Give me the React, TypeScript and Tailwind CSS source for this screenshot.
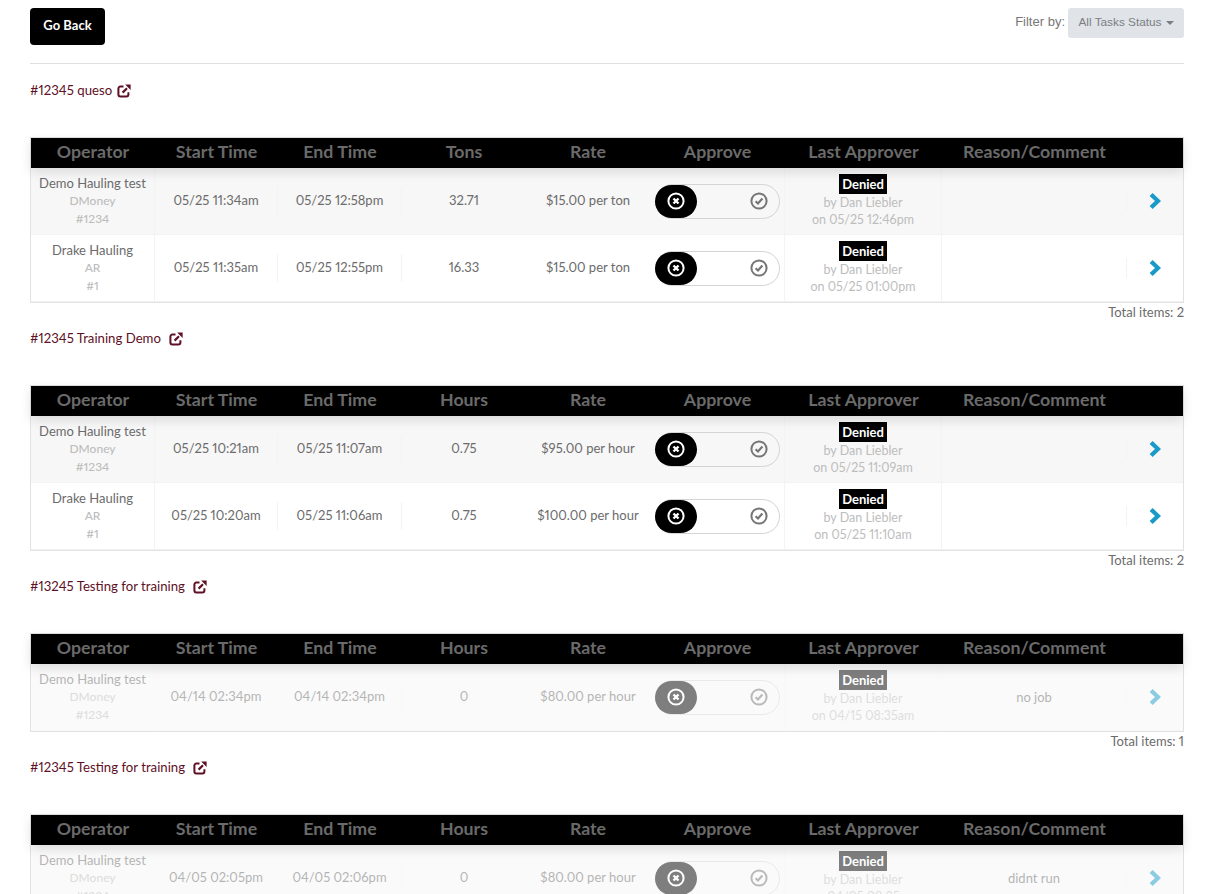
import React from 'react';

type Row = {
  name: string;
  nick: string;
  num: string;
  start: string;
  end: string;
  qty: string;
  rate: string;
  on: string;
  comment?: string;
};

type Job = {
  id: string;
  title: string;
  unit: string;
  faded?: boolean;
  total?: number;
  rows: Row[];
};

const jobs: Job[] = [
  {
    id: '#12345',
    title: 'queso',
    unit: 'Tons',
    total: 2,
    rows: [
      { name: 'Demo Hauling test', nick: 'DMoney', num: '#1234', start: '05/25 11:34am', end: '05/25 12:58pm', qty: '32.71', rate: '$15.00 per ton', on: 'on 05/25 12:46pm' },
      { name: 'Drake Hauling', nick: 'AR', num: '#1', start: '05/25 11:35am', end: '05/25 12:55pm', qty: '16.33', rate: '$15.00 per ton', on: 'on 05/25 01:00pm' },
    ],
  },
  {
    id: '#12345',
    title: 'Training Demo',
    unit: 'Hours',
    total: 2,
    rows: [
      { name: 'Demo Hauling test', nick: 'DMoney', num: '#1234', start: '05/25 10:21am', end: '05/25 11:07am', qty: '0.75', rate: '$95.00 per hour', on: 'on 05/25 11:09am' },
      { name: 'Drake Hauling', nick: 'AR', num: '#1', start: '05/25 10:20am', end: '05/25 11:06am', qty: '0.75', rate: '$100.00 per hour', on: 'on 05/25 11:10am' },
    ],
  },
  {
    id: '#13245',
    title: 'Testing for training',
    unit: 'Hours',
    faded: true,
    total: 1,
    rows: [
      { name: 'Demo Hauling test', nick: 'DMoney', num: '#1234', start: '04/14 02:34pm', end: '04/14 02:34pm', qty: '0', rate: '$80.00 per hour', on: 'on 04/15 08:35am', comment: 'no job' },
    ],
  },
  {
    id: '#12345',
    title: 'Testing for training',
    unit: 'Hours',
    faded: true,
    rows: [
      { name: 'Demo Hauling test', nick: 'DMoney', num: '#1234', start: '04/05 02:05pm', end: '04/05 02:06pm', qty: '0', rate: '$80.00 per hour', on: 'on 04/05 08:35am', comment: 'didnt run' },
    ],
  },
];

const cols = 'grid grid-cols-[124px_123px_124px_124px_124px_135px_157px_185px_56px]';

function ShareIcon({ className }: { className?: string }) {
  return (
    <svg viewBox="0 0 14 14" className={className} width="14" height="14" fill="none">
      <path d="M6.5 2.6H3.4A2 2 0 0 0 1.4 4.6v6a2 2 0 0 0 2 2h6a2 2 0 0 0 2-2V8.2" stroke="currentColor" strokeWidth="2" />
      <path d="M5.6 8.6 10 4.2" stroke="currentColor" strokeWidth="2.2" />
      <path d="M8.2 0.6h5.4V6z" fill="currentColor" />
    </svg>
  );
}

function CrossIcon() {
  return (
    <svg viewBox="0 0 18 18" width="18" height="18" fill="none" className="text-white">
      <circle cx="9" cy="9" r="7.6" stroke="currentColor" strokeWidth="2" />
      <path d="M6.5 6.5l5 5M11.5 6.5l-5 5" stroke="currentColor" strokeWidth="2.4" />
    </svg>
  );
}

function CheckIcon() {
  return (
    <svg viewBox="0 0 18 18" width="18" height="18" fill="none" className="text-[#757575]">
      <circle cx="9" cy="9" r="7.6" stroke="currentColor" strokeWidth="2" />
      <path d="M5.6 9.2l2.4 2.3 4.4-4.9" stroke="currentColor" strokeWidth="2.2" />
    </svg>
  );
}

function ChevronIcon() {
  return (
    <svg viewBox="0 0 13 16" width="13" height="16" className="text-[#1a9ac9]">
      <path d="M3.6 0 12 8l-8.4 8L0.6 13l5.4-5-5.4-5z" fill="currentColor" />
    </svg>
  );
}

function TableRow({ row, index }: { row: Row; index: number }) {
  return (
    <div className={`${cols} h-[67px] items-center border-b border-[#f3f3f3] text-center proportional-nums ${index % 2 === 0 ? 'bg-[#f7f7f7]' : 'bg-white'}`}>
      <div className="flex h-full flex-col justify-center border-r border-[#f3f3f3] leading-[17.5px]">
        <span>{row.name}</span>
        <span className="text-[12px] font-medium text-[#bdbdbd]">{row.nick}</span>
        <span className="text-[12px] font-medium text-[#bdbdbd]">{row.num}</span>
      </div>
      <div className="border-r border-[#f3f3f3] py-1">{row.start}</div>
      <div className="border-r border-[#f3f3f3] py-1">{row.end}</div>
      <div>{row.qty}</div>
      <div className="whitespace-nowrap">{row.rate}</div>
      <div className="flex h-full items-center border-r border-[#f3f3f3] pl-[5px]">
        <div className="flex h-[35px] w-[125px] items-center justify-between rounded-[18px] border border-[#d4d4d4] pr-[11px]">
          <span className="-ml-px flex h-[33px] w-[42px] items-center justify-center rounded-[17px] bg-black">
            <CrossIcon />
          </span>
          <CheckIcon />
        </div>
      </div>
      <div className="flex h-full flex-col items-center justify-center border-r border-[#f3f3f3] text-[12.5px] leading-[17.5px] text-[#bdbdbd]">
        <span className="bg-black px-[3px] text-[13px] font-bold leading-[20px] text-white">Denied</span>
        <span>by Dan Liebler</span>
        <span>{row.on}</span>
      </div>
      <div className="border-r border-[#f3f3f3] leading-[20px]">{row.comment ?? '\u00a0'}</div>
      <div className="flex justify-center pl-[1px]">
        <ChevronIcon />
      </div>
    </div>
  );
}

function JobTable({ job }: { job: Job }) {
  const headers = ['Operator', 'Start Time', 'End Time', job.unit, 'Rate', 'Approve', 'Last Approver', 'Reason/Comment', ''];
  return (
    <section>
      <div className="mt-[2px] flex h-[20px] items-center gap-[5px] text-[13.2px] text-[#5e1026]">
        <span className="proportional-nums">{job.id} {job.title}</span>
        <ShareIcon className={`-mt-px ${job.title === 'queso' ? '' : 'ml-[3px]'}`} />
      </div>
      <div className="mt-[36px] border border-[#e2e2e2]">
        <div className={`${cols} relative z-10 h-[30px] items-center bg-black pb-[3px] text-center text-[17.75px] font-bold text-[#6a6a6a] shadow-[0_4px_12px_rgba(0,0,0,0.12)]`}>
          {headers.map((h, i) => (
            <div key={i}>{h}</div>
          ))}
        </div>
        <div className={job.faded ? 'opacity-50' : ''}>
          {job.rows.map((row, i) => (
            <TableRow key={i} row={row} index={i} />
          ))}
        </div>
      </div>
      {job.total !== undefined && (
        <div className="flex h-[18px] items-center justify-end pt-[2px] text-[13px] text-[#6b6b6b] proportional-nums">Total items: {job.total}</div>
      )}
    </section>
  );
}

export default function App() {
  return (
    <main className="h-screen overflow-hidden bg-white pl-[30px] pr-[24px] pt-[8px] font-['Lato','Open_Sans',sans-serif] text-[13px] text-[#6b6b6b]">
      <div className="flex items-start justify-between">
        <button className="h-[37px] w-[75px] rounded-[4px] bg-black pb-[2px] text-[13px] font-bold text-white">Go Back</button>
        <div className="flex items-center gap-[3px] font-['Liberation_Sans',sans-serif]">
          <span className="-mt-[2px] text-[13px] text-[#777777]">Filter by:</span>
          <span className="flex h-[30px] w-[116px] items-center justify-center gap-[4px] rounded-[3px] bg-[#e0e3e7] text-[11.8px] text-[#7b7f85]">
            All Tasks Status
            <span className="h-0 w-0 border-x-[4px] border-t-[4px] border-x-transparent border-t-[#7b7f85]" />
          </span>
        </div>
      </div>
      <hr className="mt-[18px] border-[#e0e0e0]" />
      <div className="mt-[15px] flex flex-col gap-[6px]">
        {jobs.map((job, i) => (
          <JobTable key={i} job={job} />
        ))}
      </div>
    </main>
  );
}
